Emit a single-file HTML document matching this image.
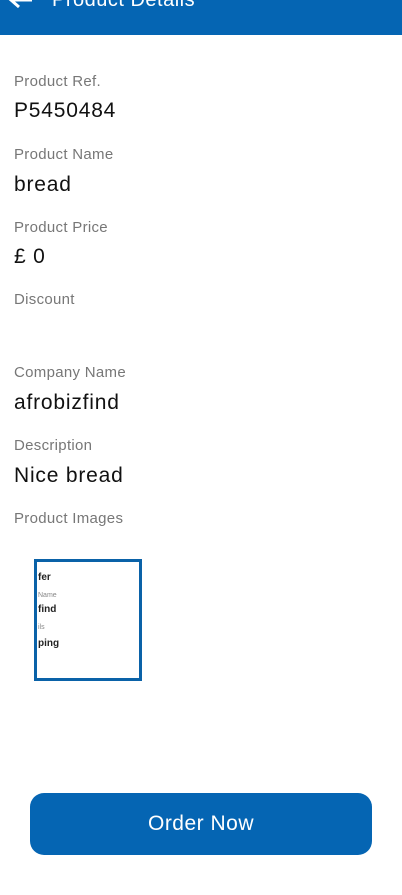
<!DOCTYPE html>
<html><head><meta charset="utf-8"><style>
body{margin:0;width:402px;height:895px;background:#fff;font-family:"Liberation Sans",sans-serif;position:relative;overflow:hidden}
.hdr{position:absolute;top:0;left:0;width:402px;height:35px;background:#0565b3}
.hdr span{position:absolute;left:52px;top:-11px;color:#fff;font-size:20px;letter-spacing:0.5px}
.lbl{position:absolute;left:14px;font-size:15px;color:#777;letter-spacing:0.3px}
.val{position:absolute;left:14px;font-size:21px;color:#111;letter-spacing:0.8px}
.img{position:absolute;left:34px;top:559px;width:102px;height:116px;border:3px solid #0a62a8;overflow:hidden;font-size:10px;color:#222}
.btn{position:absolute;left:30px;top:793px;width:342px;height:62px;background:#0565b3;border-radius:14px;color:#fff;font-size:21px;text-align:center;line-height:62px;letter-spacing:0.5px}
</style></head><body>
<div class="hdr"><svg style="position:absolute;left:8px;top:-8px" width="26" height="20"><path d="M24 8H4M11 1L3 8l8 7" stroke="#fff" stroke-width="3" fill="none"/></svg><span>Product Details</span></div>
<div class="lbl" style="top:73px">Product Ref.</div><div class="val" style="top:99px">P5450484</div>
<div class="lbl" style="top:146px">Product Name</div><div class="val" style="top:173px">bread</div>
<div class="lbl" style="top:219px">Product Price</div><div class="val" style="top:245px">£ 0</div>
<div class="lbl" style="top:291px">Discount</div>
<div class="lbl" style="top:364px">Company Name</div><div class="val" style="top:391px">afrobizfind</div>
<div class="lbl" style="top:437px">Description</div><div class="val" style="top:464px">Nice bread</div>
<div class="lbl" style="top:510px">Product Images</div>
<div class="img"><div style="position:absolute;top:10px;left:1px;font-weight:bold">fer</div><div style="position:absolute;top:30px;left:1px;font-size:7px;color:#888">Name</div><div style="position:absolute;top:42px;left:1px;font-weight:bold">find</div><div style="position:absolute;top:62px;left:1px;font-size:7px;color:#888">ils</div><div style="position:absolute;top:76px;left:1px;font-weight:bold">ping</div></div>
<div class="btn">Order Now</div>
</body></html>
